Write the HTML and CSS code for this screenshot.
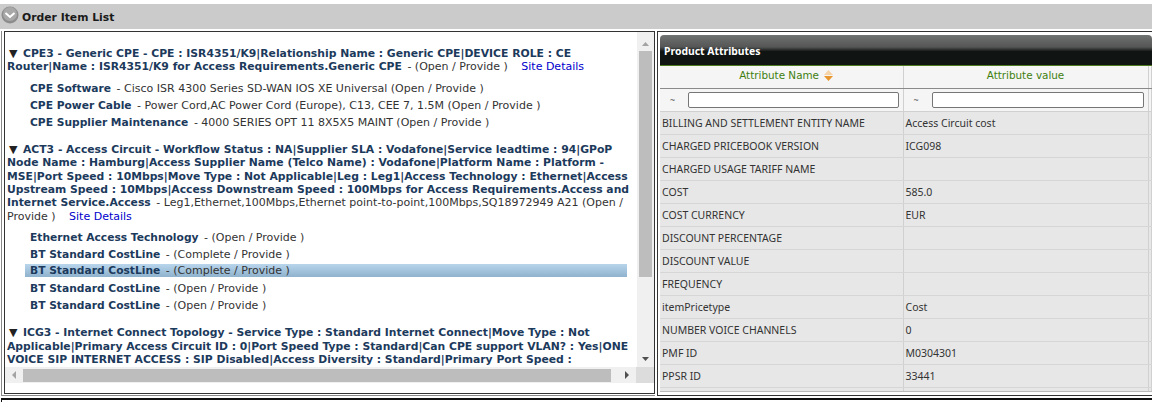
FILE: index.html
```html
<!DOCTYPE html>
<html lang="en">
<head>
  <meta charset="UTF-8" />
  <title>Order Item List</title>
  <link rel="stylesheet" href="styles.css">
</head>
<body>
  <div class="title-bar">
    <svg class="collapse-icon" width="18" height="18" viewBox="0 0 18 18">
      <circle cx="9" cy="9" r="8.5" fill="#8c8c8c"/>
      <circle cx="9" cy="8" r="7" fill="#a8a8a8"/>
      <path d="M4.5 7 L9 11 L13.5 7" fill="none" stroke="#fff" stroke-width="2"/>
    </svg>
    <span>Order Item List</span>
  </div>

  <div class="panels">
    <div class="tree-panel">
      <div class="tree-frame">
        <div class="tree-main">
          <div class="tree">
            <div class="node">
              <p class="parent"><span class="arrow">▼</span> <b>CPE3 - Generic CPE - CPE : ISR4351/K9|Relationship Name : Generic CPE|DEVICE ROLE : CE<br>Router|Name : ISR4351/K9 for Access Requirements.Generic CPE</b> <span class="info">- (Open / Provide )</span> <a class="site-link">Site Details</a></p>
              <ul class="children">
                <li><b>CPE Software</b> <span class="info">- Cisco ISR 4300 Series SD-WAN IOS XE Universal (Open / Provide )</span></li>
                <li><b>CPE Power Cable</b> <span class="info">- Power Cord,AC Power Cord (Europe), C13, CEE 7, 1.5M (Open / Provide )</span></li>
                <li><b>CPE Supplier Maintenance</b> <span class="info">- 4000 SERIES OPT 11 8X5X5 MAINT (Open / Provide )</span></li>
              </ul>
            </div>
            <div class="node">
              <p class="parent"><span class="arrow">▼</span> <b>ACT3 - Access Circuit - Workflow Status : NA|Supplier SLA : Vodafone|Service leadtime : 94|GPoP<br>Node Name : Hamburg|Access Supplier Name (Telco Name) : Vodafone|Platform Name : Platform -<br>MSE|Port Speed : 10Mbps|Move Type : Not Applicable|Leg : Leg1|Access Technology : Ethernet|Access<br>Upstream Speed : 10Mbps|Access Downstream Speed : 100Mbps for Access Requirements.Access and<br>Internet Service.Access</b> <span class="info">- Leg1,Ethernet,100Mbps,Ethernet point-to-point,100Mbps,SQ18972949 A21 (Open /<br>Provide )</span> <a class="site-link">Site Details</a></p>
              <ul class="children">
                <li><b>Ethernet Access Technology</b> <span class="info">- (Open / Provide )</span></li>
                <li><b>BT Standard CostLine</b> <span class="info">- (Complete / Provide )</span></li>
                <li class="selected"><b>BT Standard CostLine</b> <span class="info">- (Complete / Provide )</span></li>
                <li><b>BT Standard CostLine</b> <span class="info">- (Open / Provide )</span></li>
                <li><b>BT Standard CostLine</b> <span class="info">- (Open / Provide )</span></li>
              </ul>
            </div>
            <div class="node">
              <p class="parent"><span class="arrow">▼</span> <b>ICG3 - Internet Connect Topology - Service Type : Standard Internet Connect|Move Type : Not<br>Applicable|Primary Access Circuit ID : 0|Port Speed Type : Standard|Can CPE support VLAN? : Yes|ONE<br>VOICE SIP INTERNET ACCESS : SIP Disabled|Access Diversity : Standard|Primary Port Speed :</b></p>
            </div>
          </div>
          <div class="scroll-v">
            <svg width="17" height="19" viewBox="0 0 17 19"><path d="M5 14 L8.5 10 L12 14 Z" fill="#a3a3a3"/></svg>
            <div class="thumb-v"></div>
            <svg width="17" height="14" viewBox="0 0 17 14"><path d="M5 4 L12 4 L8.5 8 Z" fill="#505050"/></svg>
          </div>
        </div>
        <div class="scroll-h">
          <svg width="17" height="16" viewBox="0 0 17 16"><path d="M10 4 L10 12 L6 8 Z" fill="#a3a3a3"/></svg>
          <div class="thumb-h"></div>
          <svg class="arrow-right" width="17" height="16" viewBox="0 0 17 16"><path d="M6 4 L6 12 L10 8 Z" fill="#505050"/></svg>
          <div class="corner"></div>
        </div>
      </div>
    </div>

    <div class="attr-panel">
      <div class="attr-title">Product Attributes</div>
      <table class="attr-table">
        <thead>
          <tr class="head-row">
            <th class="sortable">Attribute Name
              <svg class="sort-icon" width="9" height="11" viewBox="0 0 9 11"><path d="M4.5 0 L9 5 L0 5 Z" fill="#f5d3a6"/><path d="M0 6 L9 6 L4.5 11 Z" fill="#e8962e"/></svg>
            </th>
            <th>Attribute value</th>
            <th></th>
          </tr>
          <tr class="filter-row">
            <td><div class="filter"><span class="tilde">~</span><input type="text"></div></td>
            <td><div class="filter"><span class="tilde">~</span><input type="text"></div></td>
            <td></td>
          </tr>
        </thead>
        <tbody>
          <tr><td>BILLING AND SETTLEMENT ENTITY NAME</td><td>Access Circuit cost</td><td></td></tr>
          <tr><td>CHARGED PRICEBOOK VERSION</td><td>ICG098</td><td></td></tr>
          <tr><td>CHARGED USAGE TARIFF NAME</td><td></td><td></td></tr>
          <tr><td>COST</td><td>585.0</td><td></td></tr>
          <tr><td>COST CURRENCY</td><td>EUR</td><td></td></tr>
          <tr><td>DISCOUNT PERCENTAGE</td><td></td><td></td></tr>
          <tr><td>DISCOUNT VALUE</td><td></td><td></td></tr>
          <tr><td>FREQUENCY</td><td></td><td></td></tr>
          <tr><td>itemPricetype</td><td>Cost</td><td></td></tr>
          <tr><td>NUMBER VOICE CHANNELS</td><td>0</td><td></td></tr>
          <tr><td>PMF ID</td><td>M0304301</td><td></td></tr>
          <tr><td>PPSR ID</td><td>33441</td><td></td></tr>
          <tr class="end-row"><td></td><td></td><td></td></tr>
        </tbody>
      </table>
    </div>
  </div>

  <div class="bottom-rule"></div>
</body>
</html>
```

FILE: styles.css
```css
html, body {
  margin: 0;
  padding: 0;
  height: 100%;
  overflow: hidden;
}
body {
  font-family: "DejaVu Sans", Verdana, sans-serif;
  font-size: 11px;
  background: #fff;
  color: #222;
  padding-top: 4px;
  box-sizing: border-box;
}
.title-bar {
  height: 25px;
  background: #cbcbcb;
  display: flex;
  align-items: center;
  gap: 3px;
  padding-left: 1px;
  font-size: 10.8px;
  font-weight: bold;
  color: #1a1a1a;
}
.title-bar span {
  margin-top: 2px;
}
.collapse-icon {
  margin-top: -4px;
}
.panels {
  display: flex;
  gap: 2px;
  padding: 2px 0 0 1px;
  height: 367px;
  box-sizing: border-box;
}
.tree-panel {
  width: 654px;
  flex: none;
  border-left: 1px solid #888;
  border-bottom: 1px solid #888;
  padding: 0 0 1px 2px;
  box-sizing: border-box;
}
.tree-frame {
  height: 100%;
  display: flex;
  flex-direction: column;
  border: 1px solid #333;
  box-sizing: border-box;
}
.tree-main {
  flex: 1;
  display: flex;
  min-height: 0;
}
.tree {
  flex: 1;
  overflow: hidden;
  padding: 15px 10px 0 2px;
  white-space: nowrap;
  color: #1c3a5c;
}
.node {
  margin-bottom: 12.5px;
}
.parent {
  margin: 0;
  line-height: 13.3px;
}
.parent b {
  font-size: 10.8px;
}
.arrow {
  color: #222;
  margin: 0 2px;
}
.info {
  color: #333;
  margin-left: 2px;
}
.site-link {
  color: #0000cc;
  margin-left: 10px;
}
.children {
  list-style: none;
  margin: 6px 0 0;
  padding: 0;
}
.children li {
  height: 17px;
  line-height: 17px;
  padding-left: 23px;
}
.children li b {
  font-size: 10.7px;
}
.children li.selected {
  margin-left: 18px;
  padding-left: 5px;
  height: 13px;
  line-height: 14px;
  margin-top: 1px;
  margin-bottom: 3px;
  background: linear-gradient(#b8d5ec, #8fb2cd);
}
.scroll-v {
  width: 17px;
  flex: none;
  background: #f0f0f0;
  display: flex;
  flex-direction: column;
  align-items: center;
}
.thumb-v {
  width: 13px;
  height: 226px;
  background: #bdbdbd;
  margin-bottom: auto;
}
.scroll-h {
  height: 16px;
  flex: none;
  background: #f0f0f0;
  display: flex;
  align-items: center;
  padding-left: 1px;
  margin-bottom: 10px;
}
.thumb-h {
  width: 588px;
  height: 13px;
  background: #bdbdbd;
}
.arrow-right {
  margin-left: 8px;
}
.corner {
  flex: 1;
  height: 100%;
  background: #dcdcdc;
}
.attr-panel {
  flex: 1;
  min-width: 0;
  overflow: hidden;
  border: 1px solid #333;
  border-right: none;
  padding: 3px 0 0 2px;
  box-sizing: border-box;
  font-family: "Noto Sans", sans-serif;
  font-size: 10.5px;
}
.attr-title {
  height: 30px;
  line-height: 33px;
  padding-left: 4px;
  border-radius: 4px 4px 0 0;
  background: linear-gradient(#6f7371 0, #555 40%, #101413 55%, #101413 100%);
  border-bottom: 1px solid #4c7a20;
  color: #fff;
  font-size: 10.4px;
  font-weight: bold;
}
.attr-table {
  width: 100%;
  border-collapse: collapse;
  table-layout: fixed;
}
.attr-table th, .attr-table td {
  padding: 0;
  border-right: 1px solid #d0d0d0;
  box-sizing: border-box;
}
.attr-table th:nth-child(1), .attr-table td:nth-child(1) { width: 243px; }
.attr-table th:nth-child(2), .attr-table td:nth-child(2) { width: 245px; }
.head-row th {
  height: 22px;
  background: #f5f5f5;
  color: #3f7f10;
  font-family: "DejaVu Sans", sans-serif;
  font-size: 10.4px;
  font-weight: normal;
  border-bottom: 1px solid #8a8a8a;
  padding-bottom: 3px;
}
.head-row th.sortable {
  padding-left: 10px;
}
.sort-icon {
  vertical-align: -2px;
  margin-left: 2px;
}
.filter-row td {
  height: 23px;
  background: #f5f5f5;
  border-bottom: 1px solid #d0d0d0;
}
.filter {
  display: flex;
  align-items: center;
  padding: 0 4px 0 10px;
  gap: 13px;
}
.tilde {
  color: #555;
  font-size: 9px;
}
.filter input {
  flex: 1;
  min-width: 0;
  height: 16px;
  padding: 0;
  border: 1px solid #767676;
  border-radius: 2px;
  background: #fff;
  box-sizing: border-box;
}
tbody td {
  height: 23px;
  background: #e7e7e7;
  border-bottom: 1px solid #d6d6d6;
  color: #333;
  white-space: nowrap;
  overflow: hidden;
}
.attr-table tbody td:nth-child(1), .attr-table tbody td:nth-child(2) {
  padding-left: 2px;
  padding-top: 1px;
}
.attr-table tbody .end-row td {
  height: 4px;
  padding: 0;
  border-bottom: 1px solid #bbb;
}
.bottom-rule {
  border-top: 2px solid #111;
  border-left: 1px solid #111;
  margin: 2px 0 0 1px;
  height: 10px;
}
```
